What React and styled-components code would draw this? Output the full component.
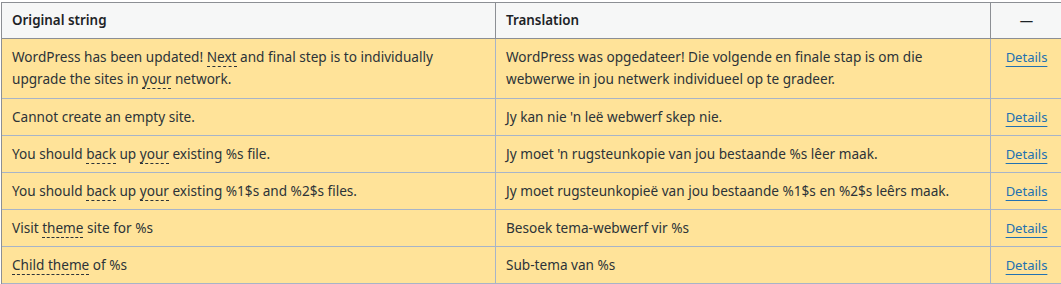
import React from 'react'
import styled, {createGlobalStyle} from 'styled-components'

const rows = [
    {
        original: ['WordPress has been updated! ', {g: 'Next'}, ' and final step is to individually upgrade the sites in ', {g: 'your'}, ' network.'],
        translation: 'WordPress was opgedateer! Die volgende en finale stap is om die\nwebwerwe in jou netwerk individueel op te gradeer.',
        wrap: true,
    },
    {original: ['Cannot create an empty site.'], translation: "Jy kan nie 'n leë webwerf skep nie."},
    {
        original: ['You should ', {g: 'back'}, ' up ', {g: 'your'}, ' existing %s file.'],
        translation: "Jy moet 'n rugsteunkopie van jou bestaande %s lêer maak.",
    },
    {
        original: ['You should ', {g: 'back'}, ' up ', {g: 'your'}, ' existing %1$s and %2$s files.'],
        translation: 'Jy moet rugsteunkopieë van jou bestaande %1$s en %2$s leêrs maak.',
    },
    {original: ['Visit ', {g: 'theme'}, ' site for %s'], translation: 'Besoek tema-webwerf vir %s'},
    {original: [{g: 'Child theme'}, ' of %s'], translation: 'Sub-tema van %s'},
]

const App = () => {
    return (
        <>
            <GlobalStyle/>
            <Page>
                <Table>
                    <HeadRow>
                        <HeadCell>Original string</HeadCell>
                        <HeadCell>Translation</HeadCell>
                        <HeadCell $center>—</HeadCell>
                    </HeadRow>
                    {rows.map((row, i) => (
                        <Row key={i}>
                            <Cell $wrap={row.wrap}>
                                {row.original.map((part, j) =>
                                    typeof part === 'string' ? part : <Glossary key={j}>{part.g}</Glossary>
                                )}
                            </Cell>
                            <Cell $wrap={row.wrap}>{row.translation}</Cell>
                            <Cell $wrap={row.wrap} $center>
                                <DetailsLink href="#">Details</DetailsLink>
                            </Cell>
                        </Row>
                    ))}
                </Table>
            </Page>
        </>
    )
}

export default App

const GlobalStyle = createGlobalStyle`
    html, body {
        margin: 0;
        padding: 0;
        background: #ffffff;
        overflow: hidden;
    }
`;

const Page = styled.div`
    padding: 2px 0 0 1px;
    font-family: "Noto Sans", "Open Sans", sans-serif;
`;

const Table = styled.div`
    width: 1060px;
    border-left: 1px solid #8c8f94;
    border-top: 1px solid #8c8f94;
`;

const HeadRow = styled.div`
    display: grid;
    grid-template-columns: 494px 495px 1fr;
    background: #f6f7f7;
    border-bottom: 1px solid #8c8f94;
`;

const HeadCell = styled.div`
    padding: 7px 10px;
    line-height: 21px;
    font-size: 13.4px;
    font-weight: 600;
    color: #1d2327;
    text-align: ${props => props.$center ? 'center' : 'left'};
    border-right: 1px solid #8c8f94;
    &:last-child {
        border-right: none;
    }
`;

const Row = styled.div`
    display: grid;
    grid-template-columns: 494px 495px 1fr;
    background: #ffe399;
    border-bottom: 1px solid #a7b4c8;
`;

const Cell = styled.div`
    padding: 7px 10px ${props => props.$wrap ? '8px' : '7px'};
    line-height: 22px;
    font-size: 13.6px;
    color: #2c3338;
    white-space: pre-line;
    text-align: ${props => props.$center ? 'center' : 'left'};
    border-right: 1px solid #a7b4c8;
    &:last-child {
        border-right: none;
    }
`;

const Glossary = styled.span`
    border-bottom: 1px dashed #2c3338;
`;

const DetailsLink = styled.a`
    font-size: 13px;
    color: #2271b1;
    text-decoration: underline;
    text-underline-offset: 4px;
`;
